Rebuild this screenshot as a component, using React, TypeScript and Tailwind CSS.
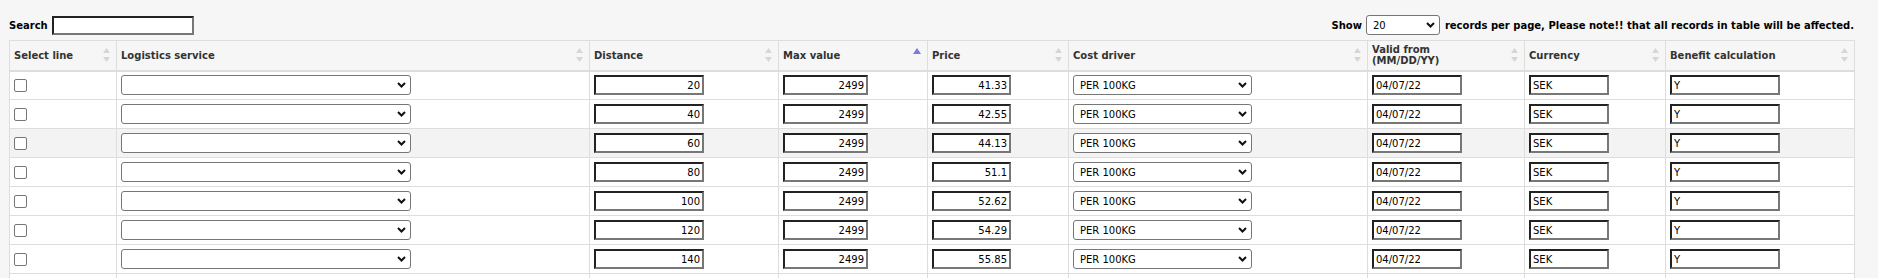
import React from "react";

type Row = { distance: number; price: string };

const rows: Row[] = [
  { distance: 20, price: "41.33" },
  { distance: 40, price: "42.55" },
  { distance: 60, price: "44.13" },
  { distance: 80, price: "51.1" },
  { distance: 100, price: "52.62" },
  { distance: 120, price: "54.29" },
  { distance: 140, price: "55.85" },
  { distance: 160, price: "57.41" },
  { distance: 180, price: "58.96" },
];

const inputCls =
  "block h-[20px] border-2 border-t-[#222] border-l-[#222] border-r-[#777] border-b-[#777] bg-white px-[2px] text-[10px] text-black outline-none";

const SortIcon = ({ active }: { active?: boolean }) =>
  active ? (
    <svg width="8" height="14" viewBox="0 0 8 14" className="shrink-0">
      <polygon points="4,0 8,6 0,6" fill="#7b7bdb" />
    </svg>
  ) : (
    <svg width="7" height="14" viewBox="0 0 7 14" className="shrink-0">
      <polygon points="3.5,0 7,5 0,5" fill="#d6d6d6" />
      <polygon points="0,9 7,9 3.5,14" fill="#d6d6d6" />
    </svg>
  );

const Chevron = () => (
  <svg width="9" height="6" viewBox="0 0 9 6" className="pointer-events-none absolute right-[5px] top-1/2 -translate-y-1/2">
    <path d="M1 1 L4.5 4.5 L8 1" fill="none" stroke="#111" strokeWidth="2" />
  </svg>
);

const Select = ({ width, value }: { width: string; value: string }) => (
  <div className={`relative ${width}`}>
    <select
      defaultValue={value}
      className="block h-[20px] w-full appearance-none rounded-[3px] border border-[#767676] bg-white pl-[6px] text-[10px] text-black outline-none"
    >
      <option value={value}>{value}</option>
    </select>
    <Chevron />
  </div>
);

const headers: { label: React.ReactNode; active?: boolean }[] = [
  { label: "Select line" },
  { label: "Logistics service" },
  { label: "Distance" },
  { label: "Max value", active: true },
  { label: "Price" },
  { label: "Cost driver" },
  {
    label: (
      <>
        Valid from
        <br />
        (MM/DD/YY)
      </>
    ),
  },
  { label: "Currency" },
  { label: "Benefit calculation" },
];

const App = () => {
  return (
    <div className="min-h-[278px] bg-[#f5f6f5] pl-[9px] pt-[15px] font-['DejaVu_Sans',Verdana,sans-serif] text-[10px] text-[#222]">
      <div className="w-[1845px]">
        <div className="flex h-[20px] items-center justify-between">
          <div className="flex items-center gap-[4px]">
            <span className="font-bold text-black">Search</span>
            <input className="block h-[19px] w-[142px] border-2 border-t-[#222] border-l-[#222] border-r-[#777] border-b-[#777] bg-white outline-none" />
          </div>
          <div className="flex items-center">
            <span className="font-bold text-black">Show</span>
            <div className="ml-[4px] mr-[5px]">
              <Select width="w-[74px]" value="20" />
            </div>
            <span className="font-bold text-black">records per page, Please note!! that all records in table will be affected.</span>
          </div>
        </div>

        <table className="mt-[5px] w-[1845px] table-fixed border-collapse">
          <colgroup>
            <col className="w-[107px]" />
            <col className="w-[473px]" />
            <col className="w-[189px]" />
            <col className="w-[149px]" />
            <col className="w-[141px]" />
            <col className="w-[299px]" />
            <col className="w-[157px]" />
            <col className="w-[141px]" />
            <col className="w-[189px]" />
          </colgroup>
          <thead>
            <tr className="h-[30px] bg-[#f5f6f5]">
              {headers.map((h, i) => (
                <th key={i} className="border border-b-2 border-[#dddddd] p-0 pl-[4px] pr-[6px] text-left align-middle">
                  <div className="flex items-center justify-between">
                    <span className="leading-[11px] font-bold text-[#333]">{h.label}</span>
                    <SortIcon active={h.active} />
                  </div>
                </th>
              ))}
            </tr>
          </thead>
          <tbody>
            {rows.map((r, i) => (
              <tr key={i} className={`h-[29px] ${i === 2 ? "bg-[#f3f3f3]" : "bg-white"}`}>
                <td className="border border-[#dddddd] p-0 pl-[4px] align-middle">
                  <span className="block h-[13px] w-[13px] rounded-[2px] border border-[#767676] bg-white" />
                </td>
                <td className="border border-[#dddddd] p-0 pl-[4px] align-middle">
                  <Select width="w-[290px]" value="" />
                </td>
                <td className="border border-[#dddddd] p-0 pl-[4px] align-middle">
                  <input readOnly defaultValue={r.distance} className={`${inputCls} w-[110px] text-right`} />
                </td>
                <td className="border border-[#dddddd] p-0 pl-[4px] align-middle">
                  <input readOnly defaultValue="2499" className={`${inputCls} w-[85px] text-right`} />
                </td>
                <td className="border border-[#dddddd] p-0 pl-[4px] align-middle">
                  <input readOnly defaultValue={r.price} className={`${inputCls} w-[79px] text-right`} />
                </td>
                <td className="border border-[#dddddd] p-0 pl-[4px] align-middle">
                  <Select width="w-[179px]" value="PER 100KG" />
                </td>
                <td className="border border-[#dddddd] p-0 pl-[4px] align-middle">
                  <input readOnly defaultValue="04/07/22" className={`${inputCls} w-[90px]`} />
                </td>
                <td className="border border-[#dddddd] p-0 pl-[4px] align-middle">
                  <input readOnly defaultValue="SEK" className={`${inputCls} w-[80px]`} />
                </td>
                <td className="border border-[#dddddd] p-0 pl-[4px] align-middle">
                  <input readOnly defaultValue="Y" className={`${inputCls} w-[110px]`} />
                </td>
              </tr>
            ))}
          </tbody>
        </table>
      </div>
    </div>
  );
};

export default App;
